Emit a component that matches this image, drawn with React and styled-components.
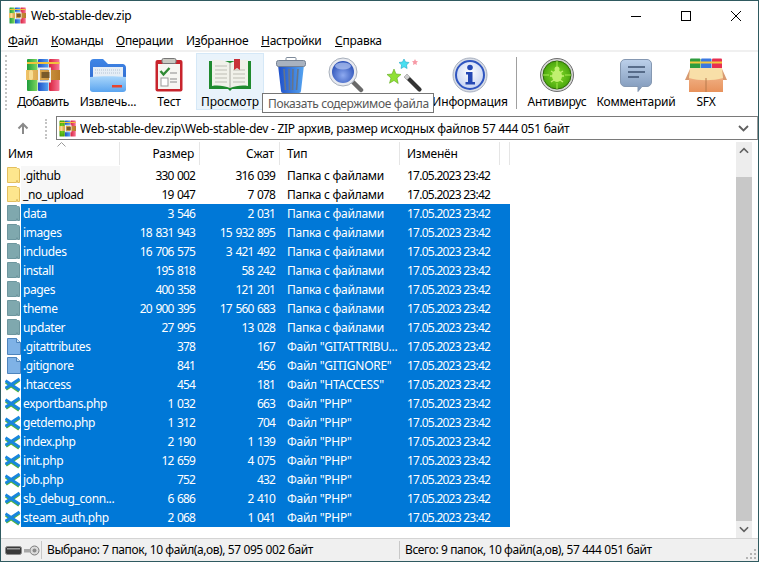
import React from "react";
import styled, { createGlobalStyle } from "styled-components";

const Global = createGlobalStyle`
  html, body { margin: 0; padding: 0; background: #fff; }
  body { font-family: "Noto Sans", "Liberation Sans", sans-serif; font-size: 12px; color: #000; }
`;

const Window = styled.div`
  width: 759px;
  height: 562px;
  box-sizing: border-box;
  border: 1px solid #2f5a60;
  display: flex;
  flex-direction: column;
  background: #fff;
  position: relative;
  overflow: hidden;
`;

const TitleBar = styled.div`
  height: 29px;
  display: flex;
  align-items: center;
  padding-left: 8px;
  gap: 5px;
  flex: none;
`;

const TitleText = styled.span`
  flex: 1;
  font-size: 12px;
  letter-spacing: -0.3px;
`;

const CaptionButton = styled.div`
  width: 45px;
  height: 29px;
  display: flex;
  align-items: center;
  justify-content: center;
`;

const MenuBar = styled.div`
  height: 20px;
  display: flex;
  align-items: center;
  padding-left: 7px;
  flex: none;
  border-bottom: 2px solid #f0f0f0;
`;

const MenuItem = styled.span`
  width: ${({ $w }) => $w}px;
  flex: none;
  white-space: nowrap;
  letter-spacing: -0.25px;
`;

const Toolbar = styled.div`
  height: 64px;
  flex: none;
  display: flex;
  padding: 1px 0 0 4px;
  box-sizing: border-box;
`;

const Grip = styled.div`
  width: 0;
  height: ${({ $h }) => $h}px;
  margin-top: 2px;
  flex: none;
  border-left: 2px dotted #c4c4c4;
`;

const Tool = styled.div`
  width: ${({ $w }) => $w}px;
  height: 57px;
  margin-left: ${({ $ml }) => $ml || 0}px;
  flex: none;
  box-sizing: border-box;
  display: flex;
  flex-direction: column;
  align-items: center;
  padding-top: 3px;
  border: 1px solid ${({ $active }) => ($active ? "#d5e8f7" : "transparent")};
  background: ${({ $active }) => ($active ? "#e9f3fb" : "transparent")};
`;

const ToolIcon = styled.div`
  height: 36px;
  flex: none;
  display: flex;
  align-items: center;
  justify-content: center;
`;

const ToolLabel = styled.span`
  flex: none;
  margin-top: 1px;
  white-space: nowrap;
  line-height: 16px;
  letter-spacing: ${({ $spacing }) => $spacing ?? -0.2}px;
`;

const Separator = styled.div`
  width: 1px;
  height: 52px;
  margin: 4px 7px 0 10px;
  flex: none;
  background: #a0a0a0;
`;

const Tooltip = styled.div`
  position: absolute;
  left: 261px;
  top: 92px;
  width: 172px;
  height: 20px;
  box-sizing: border-box;
  border: 1px solid #767676;
  background: #fff;
  color: #575757;
  display: flex;
  align-items: center;
  padding-left: 5px;
  white-space: nowrap;
  letter-spacing: -0.35px;
`;

const AddressRow = styled.div`
  height: 24px;
  flex: none;
  display: flex;
  align-items: center;
  box-sizing: border-box;
`;

const UpButton = styled.div`
  width: 44px;
  display: flex;
  justify-content: center;
  flex: none;
`;

const AddressBox = styled.div`
  flex: 1;
  height: 24px;
  margin-left: 9px;
  box-sizing: border-box;
  border: 1px solid #7a7a7a;
  border-right: 1px solid #9a9a9a;
  display: flex;
  align-items: center;
  padding: 0 2px;
  gap: 4px;
  min-width: 0;
`;

const AddressText = styled.span`
  flex: 1;
  white-space: nowrap;
  overflow: hidden;
  letter-spacing: -0.27px;
`;

const Body = styled.div`
  flex: 1;
  display: flex;
  min-height: 0;
`;

const List = styled.div`
  flex: 1;
  min-width: 0;
  display: flex;
  flex-direction: column;
`;

const Header = styled.div`
  height: 24px;
  margin-top: 2px;
  flex: none;
  display: grid;
  grid-template-columns: 119px 80px 80px 120px 100px 10px;
  align-items: stretch;
  position: relative;
`;

const HeaderCell = styled.div`
  border-right: 1px solid #e5e5e5;
  margin-bottom: 1px;
  display: flex;
  align-items: center;
  box-sizing: border-box;
  letter-spacing: -0.2px;
  justify-content: ${({ $right }) => ($right ? "flex-end" : "flex-start")};
  padding: ${({ $right }) => ($right ? "0 5px 0 0" : "0 0 0 7px")};
`;

const SortCaret = styled.svg`
  position: absolute;
  left: 56px;
  top: 0;
`;

const Row = styled.div`
  height: 19px;
  flex: none;
  display: grid;
  grid-template-columns: 20px 99px 80px 80px 120px 110px;
  align-items: center;
  width: 509px;
`;

const IconCell = styled.div`
  height: 19px;
  display: flex;
  align-items: center;
  padding-left: ${({ $pad }) => $pad}px;
`;

const Cell = styled.div`
  height: 19px;
  line-height: 19px;
  white-space: nowrap;
  overflow: hidden;
  box-sizing: border-box;
  letter-spacing: ${({ $spacing }) => $spacing}px;
  word-spacing: ${({ $wordSpacing }) => $wordSpacing || 0}px;
  background: ${({ $selected, $sorted }) => ($selected ? "#0078d7" : $sorted ? "#f7f7f7" : "transparent")};
  color: ${({ $selected }) => ($selected ? "#fff" : "#000")};
  text-align: ${({ $right }) => ($right ? "right" : "left")};
  padding: ${({ $right, $pad }) => ($right ? "0 5px 0 0" : `0 0 0 ${$pad || 7}px`)};
`;

const Scrollbar = styled.div`
  width: 16px;
  margin: 2px 6px 0 0;
  flex: none;
  display: flex;
  flex-direction: column;
  background: #ededed;
`;

const ScrollButton = styled.div`
  height: 17px;
  flex: none;
  display: flex;
  align-items: center;
  justify-content: center;
`;

const ScrollTrack = styled.div`
  flex: 1;
  display: flex;
  flex-direction: column;
  padding-top: 18px;
`;

const ScrollThumb = styled.div`
  flex: 1;
  background: #c8c8c8;
`;

const StatusBar = styled.div`
  height: 23px;
  flex: none;
  background: #f0f0f0;
  border-top: 1px solid #d4d4d4;
  display: flex;
  align-items: center;
  box-sizing: border-box;
  position: relative;
`;

const StatusIcons = styled.div`
  width: 41px;
  height: 18px;
  flex: none;
  padding-left: 4px;
  box-sizing: border-box;
  display: flex;
  align-items: center;
  gap: 2px;
  border-right: 1px solid #c8c8c8;
`;

const StatusText = styled.div`
  white-space: nowrap;
  width: ${({ $w }) => $w}px;
  flex: none;
  height: 18px;
  line-height: 17px;
  box-sizing: border-box;
  padding-left: 5px;
  letter-spacing: -0.4px;
  border-right: ${({ $divider }) => ($divider ? "1px solid #c8c8c8" : "none")};
`;

const SizeGrip = styled.svg`
  position: absolute;
  right: 1px;
  bottom: 1px;
`;

const AddressSpacer = styled.span`
  width: 2px;
  flex: none;
`;

const Gradient = ({ id, from, to, horizontal }) => (
  <linearGradient id={id} x1="0" y1="0" x2={horizontal ? "1" : "0"} y2={horizontal ? "0" : "1"}>
    <stop offset="0" stopColor={from} />
    <stop offset="1" stopColor={to} />
  </linearGradient>
);

const RarIcon = ({ size = 34, id = "r" }) => (
  <svg width={size} height={size} viewBox="0 0 34 34">
    <defs>
      <Gradient id={id + "g"} from="#1f9d3c" to="#7fd85f" horizontal />
      <Gradient id={id + "b"} from="#1f4fc8" to="#55a4f0" horizontal />
      <Gradient id={id + "p"} from="#d8213c" to="#f77596" horizontal />
      <Gradient id={id + "o"} from="#f0c468" to="#b87a2a" horizontal />
    </defs>
    <rect x="1" y="1" width="10.5" height="32" rx="1" fill={`url(#${id}g)`} />
    <rect x="12" y="1" width="10.5" height="32" rx="1" fill={`url(#${id}b)`} />
    <rect x="23" y="1" width="10.5" height="32" rx="1" fill={`url(#${id}p)`} />
    <rect x="1" y="4" width="32.5" height="2" fill="#f2c23c" />
    <rect x="0" y="12" width="34" height="10" fill={`url(#${id}o)`} />
    <rect x="3" y="12" width="4" height="10" rx="2" fill="#f7dc92" />
    <rect x="13" y="10.5" width="11" height="13" fill="none" stroke="#eee" strokeWidth="2" />
    <rect x="15.5" y="14" width="8" height="6" fill="#7a5a2a" />
  </svg>
);

const FolderIcon = () => (
  <svg width="38" height="34" viewBox="0 0 38 34">
    <defs>
      <Gradient id="fback" from="#3f86e6" to="#2a5fc6" />
      <Gradient id="ffront" from="#a9d6fb" to="#5aa4ef" />
    </defs>
    <path d="M1 5a4 4 0 0 1 4-4h9l5 5h15a4 4 0 0 1 3 4v20a3 3 0 0 1-3 3H4a3 3 0 0 1-3-3z" fill="url(#fback)" />
    <rect x="4" y="9" width="30" height="11" fill="#e6eef6" />
    <path d="M6 12h26M6 15h26" stroke="#b4c3d4" strokeDasharray="1 1" />
    <path d="M1 19c10-1 26-1 36 0v12a3 3 0 0 1-3 3H4a3 3 0 0 1-3-3z" fill="url(#ffront)" />
    <rect x="23" y="27" width="10" height="2.5" fill="#e8452e" />
  </svg>
);

const TestIcon = () => (
  <svg width="28" height="34" viewBox="0 0 28 34">
    <rect x="0.5" y="2" width="27" height="31.5" rx="2" fill="#c8242c" />
    <rect x="3" y="6" width="22" height="25" fill="#f6f6f2" />
    <rect x="7" y="0.5" width="14" height="5" rx="1.5" fill="#c9c9c2" stroke="#777" />
    <path d="M5.5 13l3 3.5 6-6.5" fill="none" stroke="#2f8a35" strokeWidth="2.4" />
    <rect x="6" y="20" width="7" height="8" fill="#fff" stroke="#9a9a9a" />
    <path d="M15 15h7M15 21h7M15 24h7" stroke="#8a8a8a" strokeWidth="1.2" />
  </svg>
);

const BookIcon = () => (
  <svg width="42" height="32" viewBox="0 0 42 32">
    <path d="M0 2h42v28H23l-2 2-2-2H0z" fill="#1f8a2e" />
    <path d="M3 1c6-1 13 0 18 3 5-3 12-4 18-3v26c-6-1-13 0-18 2-5-2-12-3-18-2z" fill="#f1f1ea" />
    <path d="M21 4v25" stroke="#a8a8a0" />
    <path d="M6 7h12M6 11h12M6 15h12M6 19h12M6 23h12M24 11h12M24 15h12M24 19h12M24 23h12" stroke="#bdbdb4" />
    <path d="M25 0h6v11l-3-2-3 2z" fill="#c83038" />
  </svg>
);

const TrashIcon = () => (
  <svg width="30" height="36" viewBox="0 0 30 36">
    <defs>
      <linearGradient id="tb" x1="0" y1="0" x2="1" y2="0">
        <stop offset="0" stopColor="#8d9bb0" />
        <stop offset="0.4" stopColor="#d4dbe4" />
        <stop offset="1" stopColor="#8d9bb0" />
      </linearGradient>
    </defs>
    <rect x="10" y="0.5" width="10" height="4" rx="1" fill="none" stroke="#7d8a9a" />
    <path d="M2 8h26l-3 26a2 2 0 0 1-2 2H7a2 2 0 0 1-2-2z" fill="url(#tb)" />
    <path d="M8 12l1.500 21M13 12l.5 21M17 12l-.5 21M22 12l-1.500 21" stroke="#66758a" strokeWidth="1.600" />
    <rect x="0.5" y="3.5" width="29" height="6" rx="2" fill="#a8b2c0" stroke="#738092" />
  </svg>
);

const SearchIcon = () => (
  <svg width="36" height="36" viewBox="0 0 36 36">
    <defs>
      <radialGradient id="sg" cx="0.5" cy="0.65" r="0.6">
        <stop offset="0" stopColor="#8eaaf0" />
        <stop offset="1" stopColor="#2c52b8" />
      </radialGradient>
    </defs>
    <path d="M24 24l9 9" stroke="#6a6a6a" strokeWidth="4.5" strokeLinecap="round" />
    <circle cx="15" cy="15" r="14" fill="#e8eaf0" stroke="#a8b0bc" />
    <circle cx="15" cy="15" r="11" fill="url(#sg)" />
    <ellipse cx="15" cy="9" rx="8" ry="3.5" fill="#b4c6f2" opacity="0.7" />
  </svg>
);

const WandIcon = () => (
  <svg width="38" height="36" viewBox="0 0 38 36">
    <path d="M19 20l3-3 14 14a2 2 0 0 1-3 3z" fill="#333" />
    <path d="M19 20l3-3 3 3-3 3z" fill="#ccc" />
    <path d="M9 12l2 5 5 .5-4 3.5 1.2 5.5L9 23.500l-4.500 2.700L6 21l-4-3.500 5-.5z" fill="#8fe034" stroke="#5fa81e" strokeWidth="0.6" />
    <path d="M19 2l1.500 3 3.500.5-2.500 2.500.6 3.500-3.100-1.700-3 1.700.6-3.500L14 5.500l3.500-.5z" fill="#48dff0" stroke="#20a8c8" strokeWidth="0.6" />
    <path d="M30 2l1 2 2 .3-1.500 1.500.4 2.200-1.900-1-2 1 .4-2.200L27 4.300l2-.3z" fill="#f79aa6" />
  </svg>
);

const InfoIcon = () => (
  <svg width="36" height="36" viewBox="0 0 36 36">
    <defs>
      <radialGradient id="ig" cx="0.5" cy="0.4" r="0.6">
        <stop offset="0" stopColor="#fff" />
        <stop offset="1" stopColor="#c4d2f2" />
      </radialGradient>
    </defs>
    <circle cx="18" cy="18" r="17" fill="#d8dde6" stroke="#a8b0c0" />
    <circle cx="18" cy="18" r="14" fill="url(#ig)" stroke="#2f55c0" strokeWidth="2" />
    <circle cx="18" cy="10.500" r="2.800" fill="#2448b4" />
    <path d="M14 15h6.500v10H23v2.500H13.500V25H16v-7.500h-2z" fill="#2448b4" />
  </svg>
);

const AntivirusIcon = () => (
  <svg width="34" height="36" viewBox="0 0 34 34">
    <defs>
      <radialGradient id="ag" cx="0.5" cy="0.5" r="0.6">
        <stop offset="0" stopColor="#86e02a" />
        <stop offset="1" stopColor="#3e9a08" />
      </radialGradient>
    </defs>
    <circle cx="17" cy="17" r="16.500" fill="#d4d4d4" stroke="#707070" />
    <circle cx="17" cy="17" r="14" fill="url(#ag)" stroke="#2e6a08" />
    <path d="M17 3v6M17 25v6M3 17h6M25 17h6" stroke="#a8ec50" />
    <ellipse cx="17" cy="18" rx="5" ry="6" fill="#c0f070" />
    <circle cx="17" cy="11" r="2.500" fill="#c0f070" />
    <path d="M11 13l3 2M23 13l-3 2M10 18h3M24 18h-3M11 24l3-2M23 24l-3-2" stroke="#c0f070" strokeWidth="1.300" />
  </svg>
);

const CommentIcon = () => (
  <svg width="32" height="33" viewBox="0 0 32 33">
    <defs>
      <Gradient id="cg" from="#bcd0ea" to="#7d96b8" />
    </defs>
    <path d="M5 0.500h22a4.500 4.500 0 0 1 4.500 4.500v18a4.500 4.500 0 0 1-4.500 4.500h-5l-4 5v-5H5a4.500 4.500 0 0 1-4.500-4.500V5A4.500 4.500 0 0 1 5 0.500z" fill="url(#cg)" stroke="#8598b2" />
    <path d="M8 8h17M8 13h17M8 18h11" stroke="#3e5270" strokeWidth="1.600" />
  </svg>
);

const SfxIcon = () => (
  <svg width="42" height="34" viewBox="0 0 42 34">
    <defs>
      <Gradient id="sb" from="#f0b084" to="#e8925c" />
    </defs>
    <rect x="5" y="0.500" width="10.500" height="14" rx="1" fill="#2f9c3e" />
    <rect x="16" y="0.500" width="10.500" height="14" rx="1" fill="#3a78e0" />
    <rect x="27" y="0.500" width="10" height="14" rx="1" fill="#e83050" />
    <rect x="5" y="3.500" width="32" height="2" fill="#f4c73e" />
    <path d="M0 22l5-11h32l5 11z" fill="#d89a70" />
    <rect x="4" y="18" width="34" height="16" fill="url(#sb)" />
    <path d="M5 10h32l1 10c-10 3-24 3-34 0z" fill="#f8dfa8" />
    <path d="M21 20v14" stroke="#b87a4c" />
  </svg>
);

const UpArrow = () => (
  <svg width="12" height="13" viewBox="0 0 12 13">
    <path d="M6 12V2M1.500 6.500L6 2l4.500 4.500" fill="none" stroke="#8a8a8a" strokeWidth="2" />
  </svg>
);

const Chevron = ({ up, color = "#606060", width = 11 }) => (
  <svg width={width} height="7" viewBox="0 0 11 7">
    <path d={up ? "M1 6l4.500-4.500L10 6" : "M1 1l4.500 4.500L10 1"} fill="none" stroke={color} strokeWidth="1.800" />
  </svg>
);

const SmallFolder = ({ selected }) => (
  <svg width="14" height="17" viewBox="0 0 14 17">
    <path d="M0.500 0.500h9l1 1h1a1 1 0 0 1 1 1v13h-2v-2h-1v2h-9z" fill={selected ? "#7fa8ae" : "#fde68e"} stroke={selected ? "#6d969e" : "#e3bf5e"} />
  </svg>
);

const SmallDoc = () => (
  <svg width="14" height="17" viewBox="0 0 14 17">
    <path d="M0.500 0.500h9l4 4v12h-13z" fill="#7fb2e6" stroke="#4d84bd" />
    <path d="M9.500 0.500v4h4" fill="#c0dcf4" stroke="#4d84bd" />
  </svg>
);

const SmallCode = () => (
  <svg width="17" height="16" viewBox="0 0 17 16">
    <path d="M1 5l14 9.500M1 12.500L15 3" fill="none" stroke="#52b43c" strokeWidth="3.400" />
    <path d="M0.500 3.500l15 10M0.500 11.500L15.500 1.500" fill="none" stroke="#1886de" strokeWidth="3.200" />
  </svg>
);

const DriveIcon = () => (
  <svg width="17" height="9" viewBox="0 0 17 9">
    <rect x="0.500" y="0.500" width="16" height="8" rx="2" fill="#3a3a3a" stroke="#8a8a8a" />
    <rect x="2" y="2" width="13" height="1.500" fill="#9a9a9a" />
  </svg>
);

const KeyIcon = () => (
  <svg width="16" height="11" viewBox="0 0 16 11">
    <circle cx="10.500" cy="5.500" r="4.500" fill="#dcdcdc" stroke="#7a7a7a" />
    <circle cx="10.500" cy="5.500" r="2" fill="#8a8a8a" />
    <rect x="0" y="4" width="7" height="3.500" fill="#a8a8a8" />
  </svg>
);

const tools = [
  { label: "Добавить", w: 62, ml: 5, icon: <RarIcon />, spacing: -0.6 },
  { label: "Извлечь...", w: 68, icon: <FolderIcon /> },
  { label: "Тест", w: 54, icon: <TestIcon /> },
  { label: "Просмотр", w: 68, icon: <BookIcon />, active: true, spacing: 0 },
  { label: "", w: 54, icon: <TrashIcon /> },
  { label: "", w: 56, icon: <SearchIcon /> },
  { label: "", w: 60, icon: <WandIcon /> },
  { label: "Информация", w: 72, icon: <InfoIcon /> },
];

const tools2 = [
  { label: "Антивирус", w: 66, icon: <AntivirusIcon /> },
  { label: "Комментарий", w: 92, icon: <CommentIcon /> },
  { label: "SFX", w: 48, icon: <SfxIcon /> },
];

const DATE = "17.05.2023 23:42";
const FOLDER = "Папка с файлами";
const PHP = "Файл \"PHP\"";

const rows = [
  [".github", "330 002", "316 039", FOLDER, "folder", false],
  ["_no_upload", "19 047", "7 078", FOLDER, "folder", false],
  ["data", "3 546", "2 031", FOLDER, "folder", true],
  ["images", "18 831 943", "15 932 895", FOLDER, "folder", true],
  ["includes", "16 706 575", "3 421 492", FOLDER, "folder", true],
  ["install", "195 818", "58 242", FOLDER, "folder", true],
  ["pages", "400 358", "121 201", FOLDER, "folder", true],
  ["theme", "20 900 395", "17 560 683", FOLDER, "folder", true],
  ["updater", "27 995", "13 028", FOLDER, "folder", true],
  [".gitattributes", "378", "167", "Файл \"GITATTRIBU...", "doc", true],
  [".gitignore", "841", "456", "Файл \"GITIGNORE\"", "doc", true],
  [".htaccess", "454", "181", "Файл \"HTACCESS\"", "code", true],
  ["exportbans.php", "1 032", "663", PHP, "code", true],
  ["getdemo.php", "1 312", "704", PHP, "code", true],
  ["index.php", "2 190", "1 139", PHP, "code", true],
  ["init.php", "12 659", "4 075", PHP, "code", true],
  ["job.php", "752", "432", PHP, "code", true],
  ["sb_debug_conn...", "6 686", "2 410", PHP, "code", true],
  ["steam_auth.php", "2 068", "1 041", PHP, "code", true],
];

const menu = [
  ["", "Ф", "айл", 43],
  ["", "К", "оманды", 65],
  ["", "О", "перации", 70],
  ["И", "з", "бранное", 75],
  ["", "Н", "астройки", 74],
  ["", "С", "правка", 70],
];

const iconPad = { folder: 6, doc: 6, code: 4 };

function FileIcon({ kind, selected }) {
  if (kind === "folder") return <SmallFolder selected={selected} />;
  if (kind === "doc") return <SmallDoc />;
  return <SmallCode />;
}

function ToolButton({ tool }) {
  return (
    <Tool $w={tool.w} $ml={tool.ml} $active={tool.active}>
      <ToolIcon>{tool.icon}</ToolIcon>
      <ToolLabel $spacing={tool.spacing}>{tool.label}</ToolLabel>
    </Tool>
  );
}

export default function App() {
  return (
    <Window>
      <Global />
      <TitleBar>
        <RarIcon size={17} id="t" />
        <TitleText>Web-stable-dev.zip</TitleText>
        <CaptionButton>
          <svg width="10" height="10" viewBox="0 0 10 10"><path d="M0 5.500h10" stroke="#000" /></svg>
        </CaptionButton>
        <CaptionButton>
          <svg width="10" height="10" viewBox="0 0 10 10"><rect x="0.500" y="0.500" width="9" height="9" fill="none" stroke="#000" /></svg>
        </CaptionButton>
        <CaptionButton>
          <svg width="10" height="10" viewBox="0 0 10 10"><path d="M0 0l10 10M10 0L0 10" stroke="#000" /></svg>
        </CaptionButton>
      </TitleBar>
      <MenuBar>
        {menu.map(([before, key, after, w]) => (
          <MenuItem key={key} $w={w}>
            {before}
            <u>{key}</u>
            {after}
          </MenuItem>
        ))}
      </MenuBar>
      <Toolbar>
        <Grip $h={55} />
        {tools.map((tool, i) => (
          <ToolButton key={i} tool={tool} />
        ))}
        <Separator />
        {tools2.map((tool, i) => (
          <ToolButton key={i} tool={tool} />
        ))}
      </Toolbar>
      <AddressRow>
        <UpButton>
          <UpArrow />
        </UpButton>
        <Grip $h={20} />
        <AddressBox>
          <RarIcon size={17} id="a" />
          <AddressText>Web-stable-dev.zip\Web-stable-dev - ZIP архив, размер исходных файлов 57 444 051 байт</AddressText>
          <Chevron />
          <AddressSpacer />
        </AddressBox>
      </AddressRow>
      <Body>
        <List>
          <Header>
            <SortCaret width="9" height="5" viewBox="0 0 9 5">
              <path d="M0.500 4.500l4-4 4 4" fill="none" stroke="#9a9a9a" />
            </SortCaret>
            <HeaderCell>Имя</HeaderCell>
            <HeaderCell $right>Размер</HeaderCell>
            <HeaderCell $right>Сжат</HeaderCell>
            <HeaderCell>Тип</HeaderCell>
            <HeaderCell>Изменён</HeaderCell>
            <HeaderCell />
          </Header>
          {rows.map(([name, size, packed, type, kind, selected]) => (
            <Row key={name}>
              <IconCell $pad={iconPad[kind]}>
                <FileIcon kind={kind} selected={selected} />
              </IconCell>
              <Cell $selected={selected} $sorted $pad={2} $spacing={-0.4}>{name}</Cell>
              <Cell $selected={selected} $right $spacing={-0.9} $wordSpacing={1.5}>{size}</Cell>
              <Cell $selected={selected} $right $spacing={-0.9} $wordSpacing={1.5}>{packed}</Cell>
              <Cell $selected={selected} $spacing={-0.27}>{type}</Cell>
              <Cell $selected={selected} $spacing={-0.75}>{DATE}</Cell>
            </Row>
          ))}
        </List>
        <Scrollbar>
          <ScrollButton>
            <Chevron up width={10} />
          </ScrollButton>
          <ScrollTrack>
            <ScrollThumb />
          </ScrollTrack>
          <ScrollButton>
            <Chevron width={10} />
          </ScrollButton>
        </Scrollbar>
      </Body>
      <StatusBar>
        <StatusIcons>
          <DriveIcon />
          <KeyIcon />
        </StatusIcons>
        <StatusText $w={358} $divider>Выбрано: 7 папок, 10 файл(а,ов), 57 095 002 байт</StatusText>
        <StatusText $w={340}>Всего: 9 папок, 10 файл(а,ов), 57 444 051 байт</StatusText>
        <SizeGrip width="12" height="12" viewBox="0 0 12 12">
          <path d="M9 1h2v2H9zM5 5h2v2H5zM9 5h2v2H9zM1 9h2v2H1zM5 9h2v2H5zM9 9h2v2H9z" fill="#b4b4b4" />
        </SizeGrip>
      </StatusBar>
      <Tooltip>Показать содержимое файла</Tooltip>
    </Window>
  );
}
